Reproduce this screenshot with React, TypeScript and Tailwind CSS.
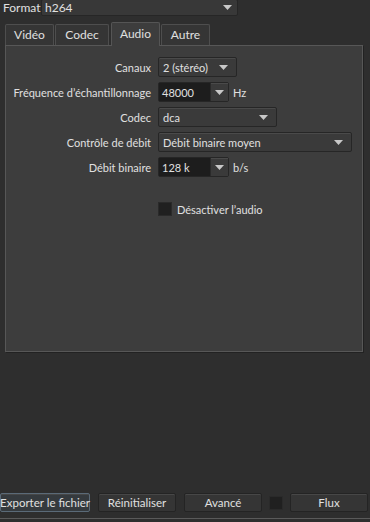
import React from "react";

const Arrow = () => (
  <svg width="9" height="5" viewBox="0 0 9 5" className="shrink-0">
    <path d="M0 0 H9 L4.5 5 Z" fill="#c8c8c8" />
  </svg>
);

function Combo({ text, width }: { text: string; width: number }) {
  return (
    <div
      className="h-[20px] flex items-center justify-between pl-[4px] pr-[8px] border border-[#262626] bg-[#3a3a3a] rounded-[2px] shadow-[inset_0_1px_0_#4a4a4a]"
      style={{ width }}
    >
      <span>{text}</span>
      <Arrow />
    </div>
  );
}

function EditCombo({ text }: { text: string }) {
  return (
    <div className="h-[20px] w-[71px] flex border border-[#262626] rounded-[2px]">
      <div className="flex-1 bg-[#1d1d1d] flex items-center pl-[3px]">{text}</div>
      <div className="w-[18px] bg-[#3a3a3a] flex items-center justify-center border-l border-[#2a2a2a] shadow-[inset_0_1px_0_#4a4a4a]">
        <Arrow />
      </div>
    </div>
  );
}

function Row({ label, children }: { label: string; children: React.ReactNode }) {
  return (
    <div className="flex items-center h-[20px]">
      <div className="w-[146px] text-right pr-[1px]">{label}</div>
      <div className="ml-[6px] flex items-center gap-[4px]">{children}</div>
    </div>
  );
}

function Btn({ text, width, active }: { text: string; width: number; active?: boolean }) {
  return (
    <div
      className={`h-[19px] flex items-center justify-center rounded-[2px] border ${active ? "border-[#5a6a78] bg-[#353a3e]" : "border-[#242424] bg-[#353535]"} shadow-[inset_0_1px_0_#474747]`}
      style={{ width }}
    >
      {text}
    </div>
  );
}

export default function App() {
  return (
    <div
      className="w-[370px] h-[522px] bg-[#2e2e2e] text-[#e0e0e0] text-[11px] leading-none whitespace-nowrap flex flex-col relative overflow-hidden"
      style={{ fontFamily: 'Lato, "Noto Sans", sans-serif' }}
    >
      <div className="flex items-center h-[17px] mt-[-1px]">
        <span className="ml-[3px] w-[38px] text-[12px]">Format</span>
        <div className="w-[197px] h-[17px] flex items-center justify-between pl-[3px] pr-[5px] bg-[#383838] border border-[#262626] rounded-[2px] text-[12px]">
          <span>h264</span>
          <Arrow />
        </div>
      </div>

      <div className="flex items-end h-[29px] ml-[5px] relative z-10 text-[12px]">
        <div className="w-[49px] h-[21px] flex items-center justify-center bg-[#353535] border border-[#4e4e4e] border-b-0 rounded-t-[2px]">Vidéo</div>
        <div className="w-[54px] h-[21px] flex items-center justify-center bg-[#353535] border border-[#4e4e4e] border-b-0 rounded-t-[2px] ml-[1px]">Codec</div>
        <div className="w-[49px] h-[24px] flex items-center justify-center bg-[#3d3d3d] border border-[#555555] border-b-0 rounded-t-[2px] ml-[2px] mb-[-1px] pb-[2px]">Audio</div>
        <div className="w-[49px] h-[21px] flex items-center justify-center bg-[#353535] border border-[#4e4e4e] border-b-0 rounded-t-[2px] ml-[1px]">Autre</div>
      </div>

      <div className="ml-[5px] w-[358px] h-[307px] bg-[#3d3d3d] border border-[#575757] shadow-[1px_1px_0_#222] flex flex-col pt-[11px] gap-[5px] text-[11px]">
        <Row label="Canaux"><Combo text="2 (stéréo)" width={79} /></Row>
        <Row label="Fréquence d’échantillonnage"><EditCombo text="48000" /><span>Hz</span></Row>
        <Row label="Codec"><Combo text="dca" width={119} /></Row>
        <Row label="Contrôle de débit"><Combo text="Débit binaire moyen" width={194} /></Row>
        <Row label="Débit binaire"><EditCombo text="128 k" /><span>b/s</span></Row>
        <div className="flex items-center mt-[20px] ml-[152px] gap-[5px]">
          <div className="w-[14px] h-[14px] bg-[#202020] border border-[#2a2a2a]" />
          <span>Désactiver l’audio</span>
        </div>
      </div>

      <div className="flex-1" />

      <div className="flex items-center h-[19px] mb-[10px] text-[11.5px]">
        <Btn text="Exporter le fichier" width={90} active />
        <div className="ml-[8px]"><Btn text="Réinitialiser" width={78} /></div>
        <div className="ml-[8px]"><Btn text="Avancé" width={78} /></div>
        <div className="ml-[7px] w-[14px] h-[14px] bg-[#202020] border border-[#2a2a2a]" />
        <div className="ml-[7px]"><Btn text="Flux" width={78} /></div>
      </div>
      <div className="absolute left-0 right-0 bottom-[3px] h-[1px] bg-[#5a5a5a]" />
    </div>
  );
}
